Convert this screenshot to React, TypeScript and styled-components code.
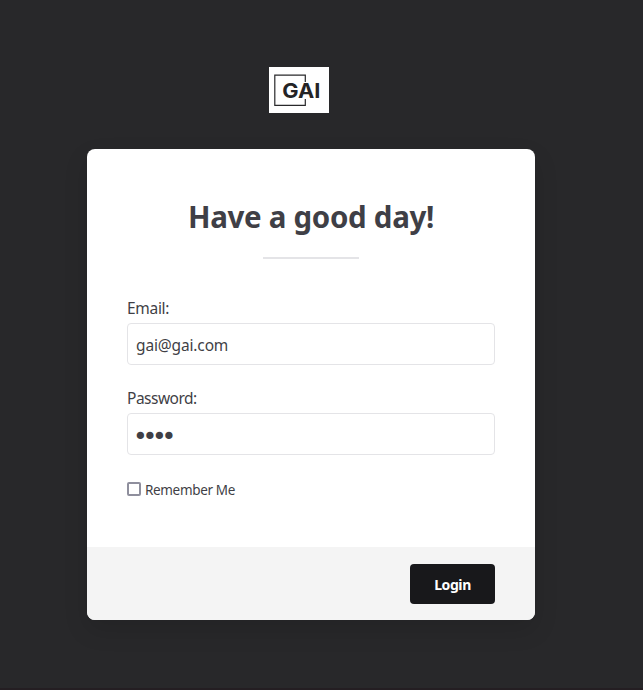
import React, { useState } from "react";
import styled, { createGlobalStyle } from "styled-components";

const GlobalStyle = createGlobalStyle`
  *, *::before, *::after { box-sizing: border-box; }
  body {
    margin: 0;
    background: #28282a;
    color: #3f3f46;
    font-family: "Segoe UI", "Noto Sans", sans-serif;
  }
`;

const Page = styled.main`
  height: 690px;
  padding: 67px 21px 0 0;
  display: flex;
  flex-direction: column;
  align-items: center;
  overflow: hidden;
  border-bottom: 2px solid #241e22;
`;

const Logo = styled.svg`
  display: block;
  flex: none;
  width: 60px;
  height: 46px;
  margin-left: -24px;
`;

const Card = styled.form`
  width: 448px;
  height: 471px;
  margin-top: 36px;
  flex: none;
  display: flex;
  flex-direction: column;
  overflow: hidden;
  border-radius: 8px;
  background: #fff;
  box-shadow: 0 10px 25px rgba(0, 0, 0, 0.12);
`;

const Body = styled.div`
  flex: 1;
  padding: 48px 40px 0;
`;

const Title = styled.h1`
  margin: 0;
  height: 40px;
  font-size: 29.5px;
  line-height: 39px;
  font-weight: 700;
  text-align: center;
  white-space: nowrap;
  letter-spacing: -0.3px;
`;

const Divider = styled.div`
  width: 96px;
  height: 2px;
  margin: 20px auto 0;
  background: #e4e4e7;
`;

const Field = styled.div<{ $top: number }>`
  margin-top: ${(p) => p.$top}px;
`;

const Label = styled.label<{ $spacing: number }>`
  display: block;
  height: 24px;
  font-size: 15.5px;
  line-height: 23px;
  letter-spacing: ${(p) => p.$spacing}px;
`;

const Input = styled.input`
  display: block;
  width: 100%;
  height: 42px;
  margin-top: 2px;
  padding: 2px 8px 0 8px;
  border: 1px solid #e4e4e7;
  border-radius: 4px;
  outline: none;
  background: #fff;
  color: #3f3f46;
  font: 15.5px/24px "Segoe UI", "Noto Sans", sans-serif;
  letter-spacing: -0.15px;
`;

const PasswordInput = styled(Input)`
  padding: 4px 5px 0;
  font-family: "DejaVu Sans", sans-serif;
  font-size: 25px;
  line-height: 36px;
  letter-spacing: -5.25px;
`;

const Remember = styled.label`
  display: flex;
  align-items: center;
  height: 20px;
  margin-top: 25px;
  font-size: 13.5px;
  line-height: 20px;
  letter-spacing: -0.34px;
`;

const Checkbox = styled.input`
  appearance: none;
  width: 14px;
  height: 14px;
  margin: 0 4px 2px 0;
  border: 2px solid #8f8f9d;
  border-radius: 2px;
  background: #fff;
  &:checked { background: #18181b; }
`;

const Footer = styled.footer`
  height: 73px;
  padding: 17px 40px 16px;
  display: flex;
  justify-content: flex-end;
  background: #f4f4f4;
`;

const Button = styled.button`
  width: 85px;
  height: 40px;
  padding: 2px 0 0;
  border: 0;
  border-radius: 4px;
  background: #18181b;
  color: #fff;
  font: 700 14px/20px "Segoe UI", "Noto Sans", sans-serif;
  letter-spacing: -0.4px;
`;

export default function App() {
  const [email, setEmail] = useState("gai@gai.com");
  const [password, setPassword] = useState("1234");

  return (
    <>
      <GlobalStyle />
      <Page>
        <Logo viewBox="0 0 60 46" role="img" aria-label="GAI">
          <rect width="60" height="46" fill="#fff" />
          <path d="M36.3 15V8.1H5.8V38.3H36.3V32" fill="none" stroke="#29292b" strokeWidth="1.2" />
          <text x="13.3" y="30.8" fill="#242426" fontFamily="Inter" fontSize="20" fontWeight="700" textLength="38" lengthAdjust="spacingAndGlyphs">GAI</text>
        </Logo>
        <Card onSubmit={(e) => e.preventDefault()}>
          <Body>
            <Title>Have a good day!</Title>
            <Divider />
            <Field $top={38}>
              <Label htmlFor="email" $spacing={-0.3}>Email:</Label>
              <Input id="email" value={email} onChange={(e) => setEmail(e.target.value)} />
            </Field>
            <Field $top={22}>
              <Label htmlFor="password" $spacing={-0.5}>Password:</Label>
              <PasswordInput id="password" type="password" value={password} onChange={(e) => setPassword(e.target.value)} />
            </Field>
            <Remember>
              <Checkbox type="checkbox" />
              Remember Me
            </Remember>
          </Body>
          <Footer>
            <Button type="submit">Login</Button>
          </Footer>
        </Card>
      </Page>
    </>
  );
}
